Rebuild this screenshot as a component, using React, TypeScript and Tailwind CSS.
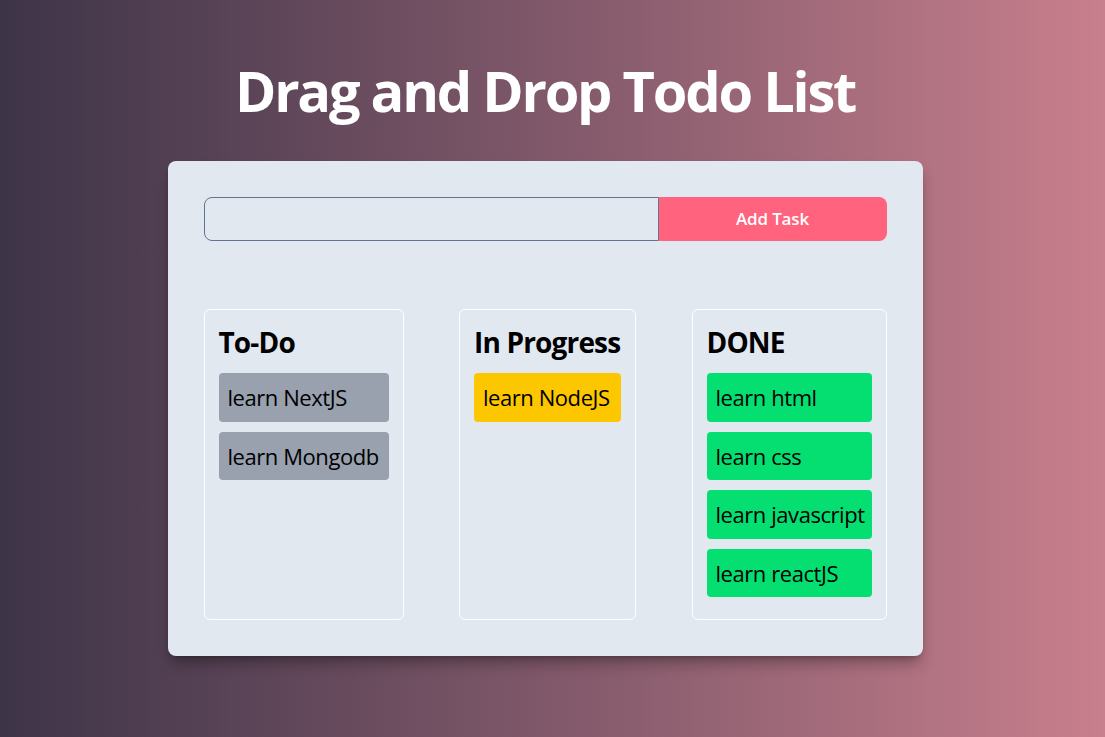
import React, { useState } from 'react';

type Task = { id: number; text: string; status: 'todo' | 'progress' | 'done' };

const INITIAL: Task[] = [
  { id: 1, text: 'learn NextJS', status: 'todo' },
  { id: 2, text: 'learn Mongodb', status: 'todo' },
  { id: 3, text: 'learn NodeJS', status: 'progress' },
  { id: 4, text: 'learn html', status: 'done' },
  { id: 5, text: 'learn css', status: 'done' },
  { id: 6, text: 'learn javascript', status: 'done' },
  { id: 7, text: 'learn reactJS', status: 'done' },
];

const COLUMNS = [
  { key: 'todo', title: 'To-Do', width: 'w-[200px]', item: 'bg-gray-400' },
  { key: 'progress', title: 'In Progress', width: 'w-[177px]', item: 'bg-yellow-400' },
  { key: 'done', title: 'DONE', width: 'w-[195px]', item: 'bg-green-400' },
] as const;

const App: React.FC = () => {
  const [tasks, setTasks] = useState<Task[]>(INITIAL);
  const [value, setValue] = useState('');
  const [dragId, setDragId] = useState<number | null>(null);

  const addTask = (e: React.FormEvent) => {
    e.preventDefault();
    if (!value.trim()) return;
    setTasks([...tasks, { id: Date.now(), text: value.trim(), status: 'todo' }]);
    setValue('');
  };

  const dropOn = (status: Task['status']) => {
    if (dragId === null) return;
    setTasks(tasks.map(t => (t.id === dragId ? { ...t, status } : t)));
    setDragId(null);
  };

  return (
    <div className="min-h-screen bg-linear-to-r from-[#3e3448] to-[#c97f8d] flex flex-col items-center pt-[62px] pr-[15px] font-['Open_Sans',sans-serif]">
      <h1 className="text-[56px] leading-none font-bold text-white tracking-[-0.04em]">Drag and Drop Todo List</h1>

      <div className="w-[755px] mt-[43px] bg-slate-200 rounded-lg shadow-lg shadow-black/30 p-9">
        {/* Add form */}
        <form onSubmit={addTask} className="flex h-11">
          <input
            value={value}
            onChange={e => setValue(e.target.value)}
            className="flex-1 bg-transparent border border-slate-500 rounded-l-lg px-3 text-base outline-none"
          />
          <button type="submit" className="w-[228px] bg-rose-400 text-white text-[17px] font-semibold rounded-r-lg tracking-[-0.01em]">
            Add Task
          </button>
        </form>

        {/* Columns */}
        <div className="flex justify-between mt-[68px]">
          {COLUMNS.map(col => (
            <div
              key={col.key}
              onDragOver={e => e.preventDefault()}
              onDrop={() => dropOn(col.key)}
              className={`${col.width} border border-white rounded-md px-[14px] pt-[14px] pb-[22px]`}
            >
              <h2 className="text-[28px] leading-[36px] font-bold text-black mb-[13px] tracking-[-0.03em]">{col.title}</h2>
              <div className="flex flex-col gap-[10px]">
                {tasks
                  .filter(t => t.status === col.key)
                  .map(t => (
                    <div
                      key={t.id}
                      draggable
                      onDragStart={() => setDragId(t.id)}
                      className={`${col.item} rounded-[4px] px-[9px] py-[9px] text-[22px] leading-[30.5px] text-black whitespace-nowrap tracking-[-0.02em]`}
                    >
                      {t.text}
                    </div>
                  ))}
              </div>
            </div>
          ))}
        </div>
      </div>
    </div>
  );
};

export default App;
